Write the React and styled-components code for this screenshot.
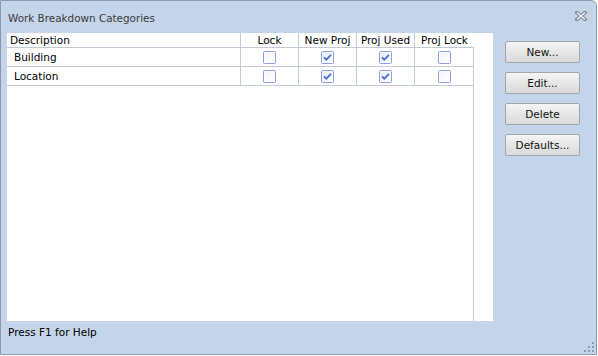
import React from "react";
import styled, { createGlobalStyle } from "styled-components";

const Global = createGlobalStyle`
  html, body { margin: 0; padding: 0; background: #ffffff; }
  body { font-family: "DejaVu Sans", Verdana, sans-serif; font-size: 10.5px; }
  * { box-sizing: border-box; }
`;

const Window = styled.div`
  width: 597px;
  height: 355px;
  background: #c4d5ea;
  border: 1px solid #8a99ad;
  border-top-right-radius: 6px;
  display: flex;
  flex-direction: column;
  position: relative;
`;

const TitleBar = styled.div`
  height: 32px;
  display: flex;
  align-items: center;
  justify-content: space-between;
  padding: 1px 9px 0 7px;
  color: #3b3b3b;
  font-size: 10.4px;
`;

const CloseBtn = styled.div`
  width: 12px;
  height: 10px;
  display: flex;
  margin-top: -3px;
`;

const Main = styled.div`
  display: flex;
  gap: 12px;
  padding-left: 6px;
  height: 288px;
`;

const Panel = styled.div`
  width: 486px;
  height: 288px;
  background: #ffffff;
  display: flex;
  flex-direction: column;
`;

const cols = "234px 58px 58px 58px 59px";

const HeaderRow = styled.div`
  display: grid;
  grid-template-columns: ${cols} 1fr;
  height: 15px;
`;

const HeadCell = styled.div`
  border-bottom: ${(p) => (p.$filler ? "none" : "1px solid #c3cbd6")};
  border-right: ${(p) => (p.$noRight ? "none" : "1px solid #c3cbd6")};
  display: flex;
  align-items: center;
  justify-content: ${(p) => (p.$left ? "flex-start" : "center")};
  padding-left: ${(p) => (p.$left ? "3px" : "0")};
  color: #000;
  white-space: nowrap;
  line-height: 14px;
`;

const Row = styled.div`
  display: grid;
  grid-template-columns: ${cols};
  height: 19px;
`;

const Cell = styled.div`
  border-bottom: 1px solid #c3cbd6;
  border-right: 1px solid #c3cbd6;
  display: flex;
  align-items: center;
  justify-content: ${(p) => (p.$left ? "flex-start" : "center")};
  padding-left: ${(p) => (p.$left ? "7px" : "0")};
  color: #000;
`;

const Filler = styled.div`
  flex: 1;
  width: 467px;
  border-right: 1px solid #c3cbd6;
`;

const Buttons = styled.div`
  display: flex;
  flex-direction: column;
  gap: 9px;
  padding-top: 8px;
`;

const Button = styled.button`
  width: 75px;
  height: 22px;
  font-family: "DejaVu Sans", Verdana, sans-serif;
  font-size: 10.5px;
  color: #111;
  border: 1px solid #a3a7ad;
  border-radius: 2px;
  background: linear-gradient(#f5f5f5, #e6e6e6 50%, #dadada);
  padding: 0;
  display: flex;
  align-items: center;
  justify-content: center;
`;

const Status = styled.div`
  flex: 1;
  padding: 5px 0 0 7px;
  color: #000;
  line-height: 13px;
`;

const Grip = styled.svg`
  position: absolute;
  right: 1px;
  bottom: 1px;
`;

function Check({ on }) {
  return (
    <svg width="13" height="13" viewBox="0 0 13 13">
      <defs>
        <linearGradient id={on ? "gOn" : "gOff"} x1="0" y1="0" x2="1" y2="1">
          <stop offset="0" stopColor={on ? "#e3e9f9" : "#f3f5fb"} />
          <stop offset="1" stopColor="#ffffff" />
        </linearGradient>
      </defs>
      <rect x="0.5" y="0.5" width="12" height="12" rx="1" fill="#fff" stroke="#8d9ee0" />
      <rect x="1.5" y="1.5" width="10" height="10" fill={`url(#${on ? "gOn" : "gOff"})`} />
      {on && (
        <path d="M3 6.3 L5.3 8.6 L10 3.8" fill="none" stroke="#4c6ccf" strokeWidth="1.8" />
      )}
    </svg>
  );
}

const rows = [
  { name: "Building", v: [false, true, true, false] },
  { name: "Location", v: [false, true, true, false] },
];

export default function App() {
  return (
    <>
      <Global />
      <Window>
        <TitleBar>
          <span>Work Breakdown Categories</span>
          <CloseBtn>
            <svg width="12" height="10" viewBox="0 0 12 10">
              <path d="M2 1.5 L10 8.5 M10 1.5 L2 8.5" stroke="#7d8b9c" strokeWidth="3.6" strokeLinecap="square" />
              <path d="M2 1.5 L10 8.5 M10 1.5 L2 8.5" stroke="#eef2f7" strokeWidth="1.4" />
            </svg>
          </CloseBtn>
        </TitleBar>
        <Main>
          <Panel>
            <HeaderRow>
              <HeadCell $left>Description</HeadCell>
              <HeadCell>Lock</HeadCell>
              <HeadCell>New Proj</HeadCell>
              <HeadCell>Proj Used</HeadCell>
              <HeadCell $noRight>Proj Lock</HeadCell>
              <HeadCell $noRight $filler />
            </HeaderRow>
            {rows.map((r) => (
              <Row key={r.name}>
                <Cell $left>{r.name}</Cell>
                {r.v.map((on, i) => (
                  <Cell key={i}>
                    <Check on={on} />
                  </Cell>
                ))}
              </Row>
            ))}
            <Filler />
          </Panel>
          <Buttons>
            <Button>New...</Button>
            <Button>Edit...</Button>
            <Button>Delete</Button>
            <Button>Defaults...</Button>
          </Buttons>
        </Main>
        <Status>Press F1 for Help</Status>
        <Grip width="11" height="11" viewBox="0 0 11 11">
          <g fill="#8a9bb4">
            <rect x="8" y="0" width="2" height="2" />
            <rect x="4" y="4" width="2" height="2" />
            <rect x="8" y="4" width="2" height="2" />
            <rect x="0" y="8" width="2" height="2" />
            <rect x="4" y="8" width="2" height="2" />
            <rect x="8" y="8" width="2" height="2" />
          </g>
        </Grip>
      </Window>
    </>
  );
}
